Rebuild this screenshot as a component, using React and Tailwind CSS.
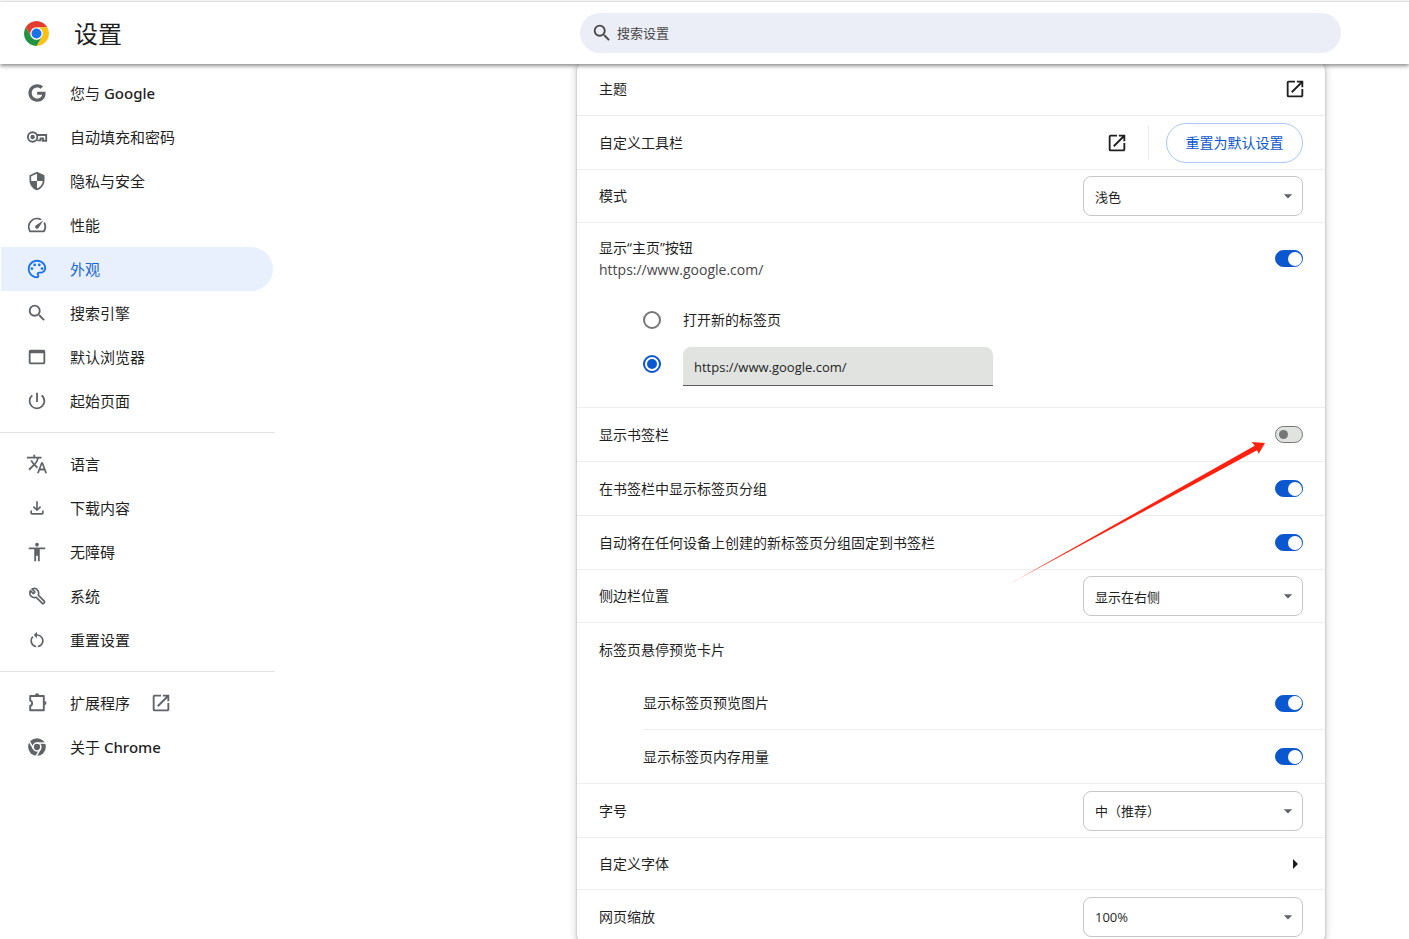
import { useState } from 'react';
import clsx from 'clsx';
import { FaGoogle } from 'react-icons/fa';
import {
  MdAccessibility,
  MdArrowDropDown,
  MdArrowRight,
  MdOpenInNew,
  MdOutlineFileDownload,
  MdOutlinePalette,
  MdPowerSettingsNew,
  MdRestartAlt,
  MdSearch,
  MdSecurity,
  MdSpeed,
  MdTranslate,
  MdWebAsset,
} from 'react-icons/md';

const ChromeLogo = () => (
  <svg viewBox="0 0 48 48" className="size-[25px] shrink-0" aria-hidden="true">
    <circle cx="24" cy="24" r="12" fill="#fff" />
    <path fill="#e33b2e" d="M24 12h20.78A24 24 0 0 0 3.22 12l10.39 18A12 12 0 0 1 24 12z" />
    <path fill="#fbc116" d="M34.39 30 24 48a24 24 0 0 0 20.78-36H24a12 12 0 0 1 10.39 18z" />
    <path fill="#229342" d="M13.61 30 3.22 12A24 24 0 0 0 24 48l10.39-18a12 12 0 0 1-20.78 0z" />
    <circle cx="24" cy="24" r="9.5" fill="#1a73e8" />
  </svg>
);

const ChromeIcon = ({ className }) => (
  <svg viewBox="0 0 24 24" className={className} aria-hidden="true">
    <circle cx="12" cy="12" r="11.8" fill="currentColor" />
    <g fill="none" stroke="#fff" strokeWidth="2">
      <circle cx="12" cy="12" r="5.2" />
      <path d="M12 6.8h12" />
      <path d="M12 6.8h12" transform="rotate(120 12 12)" />
      <path d="M12 6.8h12" transform="rotate(240 12 12)" />
    </g>
  </svg>
);

const KeyIcon = ({ className }) => (
  <svg viewBox="0 0 22 22" className={className} fill="none" stroke="currentColor" strokeWidth="1.9" aria-hidden="true">
    <circle cx="6.6" cy="11" r="4.7" />
    <circle cx="6.6" cy="11" r="2.2" fill="currentColor" stroke="none" />
    <path d="M10.8 9h9.4v5.8h-3.2v-2.4h-2.4v2h-3.4" />
  </svg>
);

const WrenchIcon = ({ className }) => (
  <svg
    viewBox="0 0 22 22"
    className={className}
    fill="none"
    stroke="currentColor"
    strokeWidth="1.7"
    strokeLinejoin="round"
    aria-hidden="true"
  >
    <path d="M4.4 5.6 7.4 8.6 9 7 6 4c2.2-.9 4.9-.3 6.1 1.8.8 1.4.8 3 .2 4.4l5.9 5.9a1.5 1.5 0 0 1-2.1 2.1l-5.9-5.9C6.400 13.800 2.500 10.300 4.400 5.600z" />
  </svg>
);

const PuzzleIcon = ({ className }) => (
  <svg viewBox="0 0 22 22" className={className} aria-hidden="true">
    <path
      d="M4.2 4h13.6v14.2H4.2v-4.4c2.5-.4 2.5-4.8 0-5.2z"
      fill="none"
      stroke="currentColor"
      strokeWidth="1.9"
      strokeLinejoin="round"
    />
    <path d="M9 3.400a2.100 2.100 0 0 1 4.200 0zM18.400 9a2.100 2.100 0 0 1 0 4.200z" fill="currentColor" />
  </svg>
);

const menuGroups = [
  [
    { text: '您与', latin: 'Google', icon: FaGoogle, iconSize: 'size-[18px]' },
    { text: '自动填充和密码', icon: KeyIcon },
    { text: '隐私与安全', icon: MdSecurity, iconSize: 'size-5' },
    { text: '性能', icon: MdSpeed },
    { text: '外观', icon: MdOutlinePalette, active: true },
    { text: '搜索引擎', icon: MdSearch },
    { text: '默认浏览器', icon: MdWebAsset },
    { text: '起始页面', icon: MdPowerSettingsNew },
  ],
  [
    { text: '语言', icon: MdTranslate },
    { text: '下载内容', icon: MdOutlineFileDownload, iconSize: 'size-5' },
    { text: '无障碍', icon: MdAccessibility },
    { text: '系统', icon: WrenchIcon },
    { text: '重置设置', icon: MdRestartAlt, iconSize: 'size-5' },
  ],
  [
    { text: '扩展程序', icon: PuzzleIcon, external: true },
    { text: '关于', latin: 'Chrome', icon: ChromeIcon, iconSize: 'size-[18px]' },
  ],
];

const MenuItem = ({ item }) => {
  const Icon = item.icon;
  return (
    <a
      href="#"
      className={clsx(
        'mr-0.5 ml-px flex h-11 items-center rounded-r-full pl-[25px] text-[15px]',
        item.active ? 'bg-[#e8f0fe] text-[#1967d2]' : 'text-[#1f1f1f]'
      )}
    >
      <span
        className={clsx(
          'mr-[22px] flex size-[22px] items-center justify-center',
          item.active ? 'text-[#1a73e8]' : 'text-[#5f6368]'
        )}
      >
        <Icon className={item.iconSize || 'size-[22px]'} />
      </span>
      <span className="pt-0.5">
        {item.text}
        {item.latin && <span className="font-['Noto_Sans'] font-medium"> {item.latin}</span>}
      </span>
      {item.external && <MdOpenInNew className="ml-5 size-[22px] text-[#5f6368]" />}
    </a>
  );
};

const Toggle = ({ id, defaultChecked = true }) => {
  const [on, setOn] = useState(defaultChecked);
  return (
    <input
      id={id}
      type="checkbox"
      role="switch"
      checked={on}
      onChange={(e) => setOn(e.target.checked)}
      className="flex h-[17px] w-7 shrink-0 appearance-none items-center rounded-full border border-[#747775] bg-[#e1e3e1] before:ml-[3px] before:size-[9px] before:rounded-full before:bg-[#747775] checked:border-[#0b57d0] checked:bg-[#0b57d0] checked:before:ml-3 checked:before:size-3.5 checked:before:bg-white"
    />
  );
};

const Select = ({ id, options }) => (
  <div className="relative">
    <select
      id={id}
      className="block h-10 w-[220px] appearance-none rounded-lg border border-[#c7c7c7] bg-white pt-0.5 pr-8 pl-[11px] text-[13px] text-[#1f1f1f]"
    >
      {options.map((option) => (
        <option key={option}>{option}</option>
      ))}
    </select>
    <MdArrowDropDown className="pointer-events-none absolute top-2.5 right-[5px] size-5 text-[#5f6368]" />
  </div>
);

const Row = ({ label, htmlFor, height = 'h-[54px]', className = 'border-[#ededed] px-[22px]', children }) => (
  <div className={clsx('flex items-center justify-between border-t', height, className)}>
    {htmlFor ? <label htmlFor={htmlFor}>{label}</label> : <span>{label}</span>}
    {children}
  </div>
);

// Red pointer to the bookmarks bar switch
const PointerArrow = () => (
  <svg
    viewBox="0 0 256 143"
    className="pointer-events-none absolute top-[34px] right-[59px] z-10 h-[143px] w-64"
    aria-hidden="true"
  >
    <path fill="#fe2110" d="M1 142 244.7 4.7 241.7 1 255 2l-6.300 10.700-1.700-3.400z" />
  </svg>
);

const radioClass =
  'flex size-[18px] shrink-0 appearance-none items-center justify-center rounded-full border-2 border-[#747775] checked:border-[#0b57d0] checked:before:size-2.5 checked:before:rounded-full checked:before:bg-[#0b57d0]';

const HomeButtonSection = () => {
  const [target, setTarget] = useState('url');
  const [url, setUrl] = useState('https://www.google.com/');

  return (
    <div className="border-t border-[#ededed] px-[22px] pb-[21px]">
      <div className="flex h-[71px] items-center justify-between">
        <label htmlFor="home-button" className="leading-[22px]">
          显示“主页”按钮
          <span className="block text-[#474747]">https://www.google.com/</span>
        </label>
        <Toggle id="home-button" />
      </div>
      <div className="pt-1 pl-11">
        <label className="flex h-11 items-center gap-[22px]">
          <input
            type="radio"
            name="home"
            checked={target === 'ntp'}
            onChange={() => setTarget('ntp')}
            className={radioClass}
          />
          打开新的标签页
        </label>
        <div className="flex h-11 items-center gap-[22px]">
          <input
            type="radio"
            name="home"
            aria-label="输入自定义网址"
            checked={target === 'url'}
            onChange={() => setTarget('url')}
            className={radioClass}
          />
          <input
            type="text"
            aria-label="网址"
            value={url}
            onChange={(e) => setUrl(e.target.value)}
            className="h-[39px] w-[310px] self-end rounded-t-lg border-b border-[#5e5e5e] bg-[#e1e3e1] px-[11px] pt-0.5 text-[13px] text-[#1f1f1f]"
          />
        </div>
      </div>
    </div>
  );
};

const App = () => {
  return (
    <div className="flex h-screen flex-col overflow-hidden bg-white pt-px font-['Open_Sans','Noto_Sans_CJK_SC',sans-serif] text-sm text-[#1f1f1f]">
      <header className="z-20 flex h-[63px] shrink-0 items-center border-t border-[#dedede] bg-white pr-[68px] pl-6 shadow-[0_2px_4px_rgba(0,0,0,0.45)]">
        <ChromeLogo />
        <h1 className="ml-[25px] pt-0.5 text-2xl">设置</h1>
        <label className="ml-auto flex h-10 max-w-[761px] flex-1 items-center gap-1 rounded-full bg-[#ebeef7] px-[11px] text-[#474747]">
          <MdSearch className="size-[22px]" />
          <input
            type="search"
            aria-label="搜索设置"
            placeholder="搜索设置"
            className="flex-1 text-[13px] placeholder:text-[#474747]"
          />
        </label>
      </header>

      <div className="flex min-h-0 flex-1">
        <nav className="w-[275px] shrink-0 pt-[7px]">
          {menuGroups.map((group, i) => (
            <div key={i} className={clsx(i > 0 && 'mt-[9px] border-t border-[#e3e3e3] pt-[9px]')}>
              {group.map((item) => (
                <MenuItem key={item.text} item={item} />
              ))}
            </div>
          ))}
        </nav>

        <main className="flex flex-1 justify-end pr-[84px] pl-6">
          <section className="-mt-0.5 h-fit w-full max-w-[748px] rounded-lg bg-white shadow-[0_1px_2px_rgba(60,64,67,0.4),0_1px_6px_2px_rgba(60,64,67,0.2)]">
            <Row label="主题" height="h-[53px]" className="border-transparent px-[22px]">
              <button type="button" aria-label="打开主题">
                <MdOpenInNew className="-mr-[3px] size-[22px]" />
              </button>
            </Row>
            <Row label="自定义工具栏">
              <div className="flex items-center">
                <button type="button" aria-label="自定义工具栏">
                  <MdOpenInNew className="size-[22px]" />
                </button>
                <span className="mr-[17px] ml-5 h-[35px] w-px bg-[#ededed]" />
                <button
                  type="button"
                  className="h-10 w-[137px] rounded-full border border-[#a8c7fa] text-[#0b57d0]"
                >
                  重置为默认设置
                </button>
              </div>
            </Row>
            <Row label="模式" htmlFor="mode" height="h-[53px]">
              <Select id="mode" options={['浅色', '深色', '设备']} />
            </Row>
            <HomeButtonSection />
            <div className="relative">
              <Row label="显示书签栏" htmlFor="bookmarks-bar">
                <Toggle id="bookmarks-bar" defaultChecked={false} />
              </Row>
              <PointerArrow />
            </div>
            <Row label="在书签栏中显示标签页分组" htmlFor="tab-groups">
              <Toggle id="tab-groups" />
            </Row>
            <Row label="自动将在任何设备上创建的新标签页分组固定到书签栏" htmlFor="auto-pin">
              <Toggle id="auto-pin" />
            </Row>
            <Row label="侧边栏位置" htmlFor="side-panel" height="h-[53px]">
              <Select id="side-panel" options={['显示在右侧', '显示在左侧']} />
            </Row>
            <Row label="标签页悬停预览卡片" />
            <Row
              label="显示标签页预览图片"
              htmlFor="hover-image"
              height="h-[53px]"
              className="ml-[66px] border-transparent pr-[22px]"
            >
              <Toggle id="hover-image" />
            </Row>
            <Row label="显示标签页内存用量" htmlFor="hover-memory" className="ml-[66px] border-[#ededed] pr-[22px]">
              <Toggle id="hover-memory" />
            </Row>
            <Row label="字号" htmlFor="font-size">
              <Select id="font-size" options={['中（推荐）', '小', '大']} />
            </Row>
            <Row label="自定义字体" height="h-[52px]">
              <button type="button" aria-label="自定义字体" className="-mr-1">
                <MdArrowRight className="size-6" />
              </button>
            </Row>
            <Row label="网页缩放" htmlFor="zoom">
              <Select id="zoom" options={['100%', '110%', '125%']} />
            </Row>
          </section>
        </main>
      </div>
    </div>
  );
};

export default App;
